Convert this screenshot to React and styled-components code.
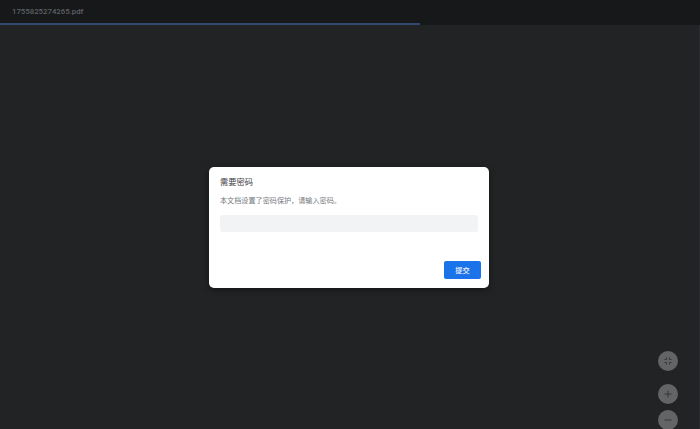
import React from "react";
import styled, { createGlobalStyle } from "styled-components";

const Global = createGlobalStyle`
  html, body { margin: 0; padding: 0; height: 100%; overflow: hidden; background: #212325; }
  #root { height: 100%; }
`;
const Page = styled.div`
  position: relative;
  width: 700px;
  height: 429px;
  overflow: hidden;
  display: flex;
  flex-direction: column;
  background: #212325;
  font-family: Roboto, "Noto Sans CJK SC", sans-serif;
`;
const Toolbar = styled.header`
  height: 23px;
  flex: none;
  display: flex;
  align-items: center;
  padding-left: 12px;
  background: #17181a;
`;
const FileName = styled.span`
  font-size: 7.8px;
  font-weight: 500;
  color: #5f6165;
`;
const Track = styled.div`
  height: 2px;
  flex: none;
  background: #17181a;
`;
const Progress = styled.div`
  height: 100%;
  width: 60%;
  background: #34486f;
`;
const Main = styled.main`
  flex: 1;
  display: flex;
  align-items: center;
  justify-content: center;
  padding-right: 2px;
`;
const Dialog = styled.section`
  width: 280px;
  height: 121px;
  box-sizing: border-box;
  padding: 9px 8px 9px 11px;
  display: flex;
  flex-direction: column;
  background: #fff;
  border-radius: 5px;
  box-shadow: 0 2px 6px rgba(0, 0, 0, 0.45);
`;
const Title = styled.h2`
  margin: 0;
  font-size: 8.25px;
  line-height: 12px;
  font-weight: 400;
  color: #3c4043;
`;
const Message = styled.p`
  margin: 7px 0 0;
  font-size: 7.12px;
  line-height: 11px;
  color: #76797d;
`;
const PasswordField = styled.input`
  display: block;
  width: 258px;
  height: 17px;
  margin-top: 9px;
  padding: 0;
  box-sizing: border-box;
  border: none;
  border-radius: 3px;
  background: #f1f3f4;
  outline: none;
`;
const Actions = styled.div`
  margin-top: auto;
  display: flex;
  justify-content: flex-end;
`;
const Submit = styled.button`
  width: 37px;
  height: 18px;
  padding: 0;
  border: none;
  border-radius: 2px;
  background: #1a73e8;
  color: #f1f5fe;
  font-family: inherit;
  font-size: 7.2px;
  font-weight: 500;
`;
const FloatingControls = styled.div`
  position: absolute;
  left: 658px;
  top: 351px;
  display: flex;
  flex-direction: column;
`;
const RoundButton = styled.button`
  width: 20px;
  height: 20px;
  padding: 0;
  margin-top: ${(p) => p.$gap || 0}px;
  border: none;
  border-radius: 50%;
  background: #636466;
  display: flex;
  align-items: center;
  justify-content: center;
  svg { display: block; }
`;
const ScrollEdge = styled.div`
  position: absolute;
  right: 0;
  top: 25px;
  bottom: 0;
  width: 1px;
  background: #2b2c2f;
`;
const Icon = ({ children }) => (
  <svg width="12" height="12" viewBox="0 0 12 12" fill="none" stroke="#36373b" strokeWidth="1">
    {children}
  </svg>
);

export default function App() {
  return (
    <Page>
      <Global />
      <Toolbar>
        <FileName>1755825274265.pdf</FileName>
      </Toolbar>
      <Track>
        <Progress />
      </Track>
      <Main>
        <Dialog>
          <Title>需要密码</Title>
          <Message>本文档设置了密码保护，请输入密码。</Message>
          <PasswordField type="password" aria-label="密码" />
          <Actions>
            <Submit>提交</Submit>
          </Actions>
        </Dialog>
      </Main>
      <ScrollEdge />
      <FloatingControls>
        <RoundButton aria-label="适合页面">
          <Icon>
            <path d="M4.5 2.5V4.5H2.5M7.5 2.5V4.5H9.5M4.5 9.5V7.5H2.5M7.5 9.5V7.5H9.5" />
          </Icon>
        </RoundButton>
        <RoundButton $gap={13} aria-label="放大">
          <Icon>
            <path d="M6 2.5v7M2.5 6h7" />
          </Icon>
        </RoundButton>
        <RoundButton $gap={6} aria-label="缩小">
          <Icon>
            <path d="M2.5 6h7" />
          </Icon>
        </RoundButton>
      </FloatingControls>
    </Page>
  );
}
